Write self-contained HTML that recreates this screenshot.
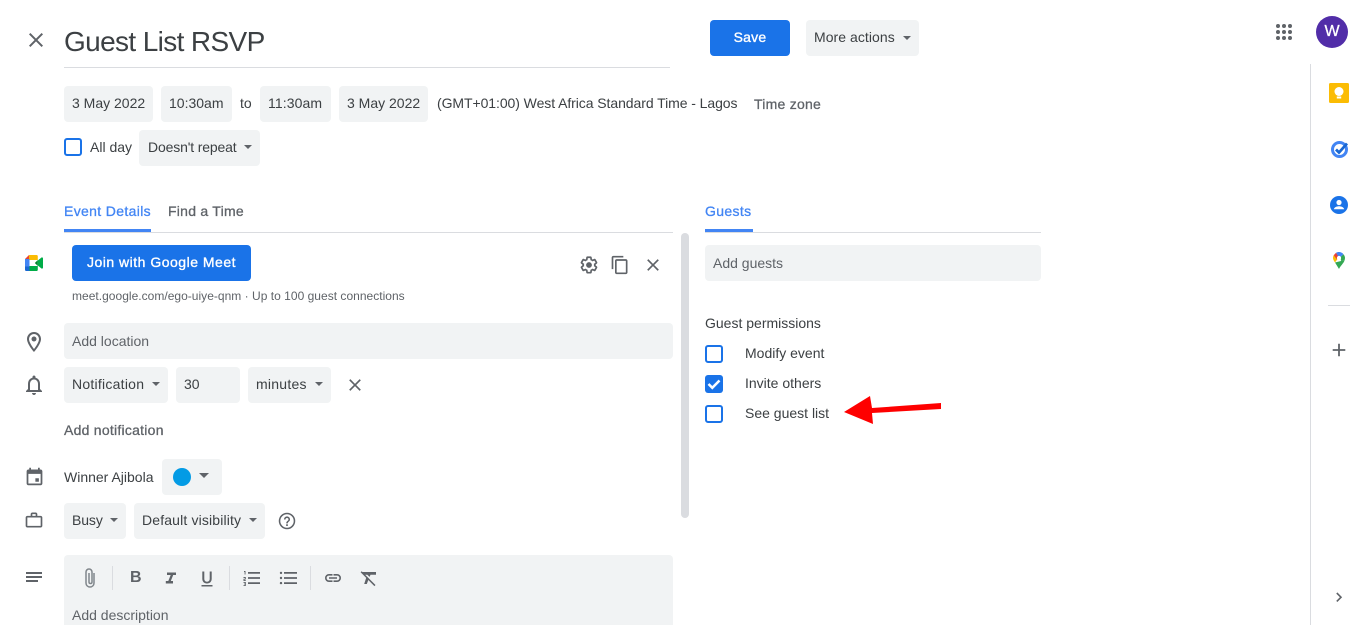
<!DOCTYPE html>
<html lang="en"><head><meta charset="utf-8"><title>Guest List RSVP</title>
<style>
html,body{margin:0;padding:0;width:1366px;height:625px;overflow:hidden;background:#fff}
body{position:relative;font-family:"Liberation Sans",Arial,sans-serif;color:#3c4043;font-size:14px}
.t{position:absolute;white-space:nowrap;line-height:20px;font-size:14px;color:#3c4043}
.b{position:absolute;background:#f1f3f4;border-radius:4px}
.m{color:#5f6368;-webkit-text-stroke:.3px #5f6368;letter-spacing:.25px}
.mb{color:#4285f4;-webkit-text-stroke:.3px #4285f4;letter-spacing:.35px}
.g{color:#5f6368}
.c{position:absolute;width:14px;height:14px;border:2px solid #1a73e8;border-radius:3px}
.a{position:absolute;width:0;height:0;border-left:4px solid transparent;border-right:4px solid transparent;border-top:4px solid #5f6368}
svg{position:absolute;overflow:visible}
.l{position:absolute;background:#dadce0}
.i{fill:#5f6368}
.s{position:absolute;width:1px;height:24px;background:#dadce0;top:566px}
.w{position:absolute;background:#1a73e8;border-radius:4px;color:#fff;font-size:14px;line-height:35px;text-align:center;-webkit-text-stroke:.35px #fff}
</style></head><body>

<svg style="left:24px;top:28px" width="24" height="24" viewBox="0 0 24 24"><path class="i" d="M19 6.410 17.590 5 12 10.590 6.410 5 5 6.410 10.590 12 5 17.590 6.410 19 12 13.410 17.590 19 19 17.590 13.410 12z"/></svg>
<div class="t" style="left:64px;top:24px;font-size:28px;line-height:36px;letter-spacing:-.63px">Guest List RSVP</div>
<div class="l" style="left:64px;top:67px;width:606px;height:1px"></div>

<div class="w" style="left:710px;top:20px;width:80px;height:36px;letter-spacing:.2px">Save</div>
<div class="b" style="left:806px;top:20px;width:113px;height:36px"></div>
<div class="t" style="left:814px;top:27px;letter-spacing:.05px">More actions</div>
<div class="a" style="left:903px;top:36px"></div>

<svg style="left:1276px;top:24px" width="16" height="16" viewBox="0 0 16 16"><g fill="#5f6368"><circle cx="2" cy="2" r="2"/><circle cx="8" cy="2" r="2"/><circle cx="14" cy="2" r="2"/><circle cx="2" cy="8" r="2"/><circle cx="8" cy="8" r="2"/><circle cx="14" cy="8" r="2"/><circle cx="2" cy="14" r="2"/><circle cx="8" cy="14" r="2"/><circle cx="14" cy="14" r="2"/></g></svg>
<div style="position:absolute;left:1316px;top:16px;width:32px;height:32px;border-radius:50%;background:#512da8;color:#fff;font-size:16px;line-height:32px;text-align:center;-webkit-text-stroke:.3px #fff">W</div>

<div class="b" style="left:64px;top:86px;width:89px;height:36px"></div><div class="t" style="left:72px;top:93px">3 May 2022</div>
<div class="b" style="left:161px;top:86px;width:71px;height:36px"></div><div class="t" style="left:169px;top:93px">10:30am</div>
<div class="t" style="left:240px;top:93px">to</div>
<div class="b" style="left:260px;top:86px;width:71px;height:36px"></div><div class="t" style="left:268px;top:93px;letter-spacing:.1px">11:30am</div>
<div class="b" style="left:339px;top:86px;width:89px;height:36px"></div><div class="t" style="left:347px;top:93px">3 May 2022</div>
<div class="t" style="left:437px;top:93px;letter-spacing:-.07px">(GMT+01:00) West Africa Standard Time - Lagos</div>
<div class="t m" style="left:754px;top:94px">Time zone</div>

<div class="c" style="left:64px;top:138px"></div>
<div class="t" style="left:90px;top:137px">All day</div>
<div class="b" style="left:139px;top:130px;width:121px;height:36px"></div>
<div class="t" style="left:148px;top:137px;letter-spacing:-.15px">Doesn't repeat</div>
<div class="a" style="left:244px;top:145px"></div>

<div class="t mb" style="left:64px;top:201px">Event Details</div>
<div class="t m" style="left:168px;top:201px">Find a Time</div>
<div style="position:absolute;left:64px;top:229px;width:87px;height:3px;background:#4285f4"></div>
<div class="l" style="left:64px;top:232px;width:609px;height:1px"></div>

<div class="t mb" style="left:705px;top:201px">Guests</div>
<div style="position:absolute;left:705px;top:229px;width:48px;height:3px;background:#4285f4"></div>
<div class="l" style="left:705px;top:232px;width:336px;height:1px"></div>

<div style="position:absolute;left:681px;top:233px;width:8px;height:285px;background:#dadce0;border-radius:4px"></div>

<svg style="left:25px;top:255px" width="18" height="16" viewBox="0 0 18 16">
<path fill="#fbbc04" d="M4 0h7.500c.8 0 1.300.6 1.300 1.300V5H4z"/>
<path fill="#00ac47" d="M4 11h8.800v3.700c0 .7-.5 1.300-1.300 1.300H4z"/>
<path fill="#ea4335" d="M4 0 0 4h4z"/>
<path fill="#4285f4" d="M0 4h4.500v8H0z"/>
<path fill="#1967d2" d="M0 11.500h4.500V16H1.300C.6 16 0 15.400 0 14.700z"/>
<path fill="#00832d" d="M12.800 5v6l-3-3z"/>
<path fill="#00ac47" d="m12.800 5.500 3.700-3c.6-.4 1.500 0 1.500.7v9.600c0 .7-.9 1.100-1.500.7l-3.700-3z"/>
</svg>
<div class="w" style="left:72px;top:245px;width:179px;height:36px;letter-spacing:.5px">Join with Google Meet</div>
<div class="t g" style="left:72px;top:286px;font-size:12px;letter-spacing:.02px">meet.google.com/ego-uiye-qnm · Up to 100 guest connections</div>

<svg style="left:579px;top:255px" width="20" height="20" viewBox="0 0 24 24"><path class="i" d="M13.850 22.250h-3.700c-.74 0-1.360-.54-1.480-1.270l-.27-1.890c-.27-.14-.53-.29-.79-.46l-1.800.72c-.7.260-1.470-.03-1.810-.65L2.150 15.500c-.35-.66-.2-1.440.36-1.880l1.530-1.190c-.01-.15-.02-.3-.02-.46 0-.15.010-.31.020-.46l-1.520-1.190c-.59-.45-.74-1.260-.37-1.880l1.850-3.200c.34-.62 1.110-.9 1.790-.63l1.810.73c.26-.17.520-.32.780-.46l.27-1.910c.12-.7.740-1.250 1.470-1.250h3.700c.74 0 1.360.54 1.480 1.270l.27 1.890c.27.140.53.290.79.460l1.800-.72c.71-.26 1.480.030 1.820.650l1.840 3.180c.36.660.2 1.440-.36 1.880l-1.520 1.190c.01.150.02.300.02.460s-.01.310-.02.460l1.520 1.190c.56.450.72 1.230.37 1.860l-1.860 3.220c-.34.620-1.110.900-1.800.630l-1.800-.72c-.26.170-.52.320-.78.460l-.27 1.910c-.1.680-.72 1.220-1.460 1.220zm-3.230-2h2.760l.37-2.550.53-.22c.44-.18.880-.44 1.340-.78l.45-.34 2.380.96 1.380-2.400-2.030-1.580.07-.56c.03-.26.060-.51.060-.78s-.03-.53-.06-.78l-.07-.56 2.030-1.580-1.390-2.400-2.390.96-.45-.35c-.42-.32-.87-.58-1.330-.77l-.52-.22-.37-2.550h-2.760l-.37 2.550-.53.210c-.44.190-.88.440-1.340.790l-.45.330-2.380-.95-1.390 2.390 2.030 1.580-.07.560a7 7 0 0 0-.06.790c0 .26.020.530.060.780l.07.560-2.030 1.580 1.380 2.400 2.390-.96.450.35c.43.330.860.580 1.330.770l.53.220.38 2.550z"/><circle class="i" cx="12" cy="12" r="3.500"/></svg>
<svg style="left:610px;top:255px" width="20" height="20" viewBox="0 0 24 24"><path class="i" d="M16 1H4c-1.100 0-2 .9-2 2v14h2V3h12V1zm3 4H8c-1.100 0-2 .9-2 2v14c0 1.100.9 2 2 2h11c1.100 0 2-.9 2-2V7c0-1.100-.9-2-2-2zm0 16H8V7h11v14z"/></svg>
<svg style="left:643px;top:255px" width="20" height="20" viewBox="0 0 24 24"><path class="i" d="M19 6.410 17.590 5 12 10.590 6.410 5 5 6.410 10.590 12 5 17.590 6.410 19 12 13.410 17.590 19 19 17.590 13.410 12z"/></svg>

<svg style="left:22px;top:330px" width="24" height="24" viewBox="0 0 24 24"><path class="i" d="M12 2C8.100 2 5 5.100 5 9c0 5.250 7 13 7 13s7-7.750 7-13c0-3.900-3.100-7-7-7zm0 17c-2-2.600-5-7-5-10a5 5 0 0 1 10 0c0 3-3 7.400-5 10z"/><circle class="i" cx="12" cy="9" r="2.500"/></svg>
<div class="b" style="left:64px;top:323px;width:609px;height:36px"></div>
<div class="t g" style="left:72px;top:331px">Add location</div>

<svg style="left:22px;top:373px" width="24" height="24" viewBox="0 0 24 24"><path class="i" d="M18 16v-5c0-3.100-1.600-5.600-4.500-6.300V4c0-.8-.7-1.500-1.500-1.500s-1.500.7-1.500 1.500v.7C7.600 5.400 6 7.900 6 11v5l-2 2v1h16v-1zm-2 1H8v-6c0-2.500 1.500-4.500 4-4.500s4 2 4 4.500zM12 22c1.100 0 2-.9 2-2h-4c0 1.100.9 2 2 2z"/></svg>
<div class="b" style="left:64px;top:367px;width:104px;height:36px"></div><div class="t" style="left:72px;top:374px;letter-spacing:.25px">Notification</div><div class="a" style="left:152px;top:382px"></div>
<div class="b" style="left:176px;top:367px;width:64px;height:36px"></div><div class="t" style="left:184px;top:374px">30</div>
<div class="b" style="left:248px;top:367px;width:83px;height:36px"></div><div class="t" style="left:256px;top:374px;letter-spacing:.25px">minutes</div><div class="a" style="left:315px;top:382px"></div>
<svg style="left:345px;top:375px" width="20" height="20" viewBox="0 0 24 24"><path class="i" d="M19 6.410 17.590 5 12 10.590 6.410 5 5 6.410 10.590 12 5 17.590 6.410 19 12 13.410 17.590 19 19 17.590 13.410 12z"/></svg>
<div class="t m" style="left:64px;top:420px">Add notification</div>

<svg style="left:24px;top:466px" width="21" height="21" viewBox="0 0 24 24"><path class="i" d="M19 4h-1V2h-2v2H8V2H6v2H5c-1.100 0-2 .9-2 2v14c0 1.100.9 2 2 2h14c1.100 0 2-.9 2-2V6c0-1.100-.9-2-2-2zm0 16H5V9h14z"/><path class="i" d="M13 14h4v4h-4z"/></svg>
<div class="t" style="left:64px;top:467px">Winner Ajibola</div>
<div class="b" style="left:162px;top:459px;width:60px;height:36px"></div>
<div style="position:absolute;left:173px;top:468px;width:18px;height:18px;border-radius:50%;background:#039be5"></div>
<div class="a" style="left:199px;top:473px;border-left-width:5px;border-right-width:5px;border-top-width:5px"></div>

<svg style="left:24px;top:510px" width="20" height="20" viewBox="0 0 24 24"><path class="i" d="M20 7h-4V5c0-1.100-.9-2-2-2h-4c-1.100 0-2 .9-2 2v2H4c-1.100 0-2 .9-2 2v10c0 1.100.9 2 2 2h16c1.100 0 2-.9 2-2V9c0-1.100-.9-2-2-2zM10 5h4v2h-4zm10 14H4V9h16z"/></svg>
<div class="b" style="left:64px;top:503px;width:62px;height:36px"></div><div class="t" style="left:72px;top:510px;letter-spacing:-.1px">Busy</div><div class="a" style="left:110px;top:518px"></div>
<div class="b" style="left:134px;top:503px;width:131px;height:36px"></div><div class="t" style="left:142px;top:510px;letter-spacing:.15px">Default visibility</div><div class="a" style="left:249px;top:518px"></div>
<svg style="left:276px;top:510px" width="22" height="22" viewBox="0 0 24 24"><path class="i" d="M12 3a9 9 0 1 0 0 18 9 9 0 0 0 0-18zm0 16.300a7.300 7.300 0 1 1 0-14.600 7.300 7.300 0 0 1 0 14.600zM11.100 15.600h1.800v1.800h-1.800zM12 7a3.300 3.300 0 0 0-3.300 3.300h1.700a1.600 1.600 0 1 1 3.200 0c0 1.600-2.500 1.500-2.500 4.300h1.800c0-2 2.400-2.300 2.400-4.300A3.300 3.300 0 0 0 12 7z"/></svg>

<svg style="left:26px;top:572px" width="16" height="10" viewBox="0 0 16 10"><path class="i" d="M0 0h16v2H0zM0 4h16v2H0zM0 8h12v2H0z"/></svg>
<div class="b" style="left:64px;top:555px;width:609px;height:80px"></div>
<svg style="left:78px;top:566px" width="24" height="24" viewBox="0 0 24 24"><path fill="none" stroke="#80868b" stroke-width="1.500" d="M16 7v10c0 2.300-1.800 4-4 4s-4-1.700-4-4V6c0-1.500 1.200-3 3-3s3 1.500 3 3v10c0 .8-.5 1.500-1.500 1.500S11 16.800 11 16V7"/></svg>
<div class="s" style="left:112px"></div>
<div class="t" style="left:130px;top:568px;font-weight:700;font-size:16px;color:#5f6368">B</div>
<svg style="left:159px;top:566px" width="24" height="24" viewBox="0 0 24 24"><path class="i" d="M8 6.500h9v2.500h-2.800l-2.400 6H14v2.500H6.800V15h2.500l2.400-6H8z"/></svg>
<svg style="left:195px;top:566px" width="24" height="24" viewBox="0 0 24 24"><path class="i" d="M6.500 19h11v1.500h-11zM12 17.500c-2.800 0-4.700-1.800-4.700-4.700V5.500h2v7.300c0 1.800 1 2.900 2.700 2.900s2.700-1.100 2.700-2.900V5.500h2v7.300c0 2.900-1.900 4.700-4.700 4.700z"/></svg>
<div class="s" style="left:229px"></div>
<svg style="left:240px;top:566px" width="24" height="24" viewBox="0 0 24 24"><path class="i" d="M8 6h12v1.800H8zM8 11.100h12v1.800H8zM8 16.200h12v1.800H8zM4 5h1.500v3.500H4.600V6H4zM3.500 11h2.300v2.500H4.500v.6h1.300v.9H3.500v-2.300h1.400V12H3.500zM3.500 16h2.300v4H3.500v-.9h1.400v-.7H4v-.8h.9v-.7H3.500z"/></svg>
<svg style="left:276px;top:566px" width="24" height="24" viewBox="0 0 24 24"><path class="i" d="M8 6h13v1.800H8zM8 11.100h13v1.800H8zM8 16.200h13v1.800H8z"/><circle class="i" cx="5" cy="6.900" r="1.200"/><circle class="i" cx="5" cy="12" r="1.200"/><circle class="i" cx="5" cy="17.100" r="1.200"/></svg>
<div class="s" style="left:310px"></div>
<svg style="left:321px;top:566px" width="24" height="24" viewBox="0 0 24 24"><path class="i" d="M8 8h3.500v1.600H8a2.400 2.400 0 0 0 0 4.800h3.500V16H8a4 4 0 0 1 0-8zm4.500 0H16a4 4 0 0 1 0 8h-3.500v-1.600H16a2.400 2.400 0 0 0 0-4.800h-3.500zM8 11.200h8v1.600H8z"/></svg>
<svg style="left:356px;top:566px" width="24" height="24" viewBox="0 0 24 24"><path class="i" d="M5 6h15v2.800h-5.500l-.9 2.100-2.300-2.100H8.500L5.700 6zM4.600 6.300l1.100-1.100L19.500 19l-1.100 1.100zM10.200 11.700l2.200 2.100-1.600 4.200H8.200z"/></svg>
<div class="t g" style="left:72px;top:605px">Add description</div>

<div class="b" style="left:705px;top:245px;width:336px;height:36px"></div>
<div class="t g" style="left:713px;top:253px">Add guests</div>
<div class="t" style="left:705px;top:313px">Guest permissions</div>
<div class="c" style="left:705px;top:345px"></div>
<div class="t" style="left:745px;top:343px">Modify event</div>
<div style="position:absolute;left:705px;top:375px;width:18px;height:18px;background:#1a73e8;border-radius:3px"></div>
<svg style="left:705px;top:375px" width="18" height="18" viewBox="0 0 18 18"><path d="M3.500 9 7.300 12.800 14.500 5.500" fill="none" stroke="#fff" stroke-width="2.500"/></svg>
<div class="t" style="left:745px;top:373px">Invite others</div>
<div class="c" style="left:705px;top:405px"></div>
<div class="t" style="left:745px;top:403px">See guest list</div>

<svg style="left:0;top:0" width="1366" height="625"><path fill="#fe0000" d="M844 412 870 396 872 408 941 403 941 409 872 413 873 424z"/></svg>

<div class="l" style="left:1310px;top:64px;width:1px;height:561px"></div>
<svg style="left:1329px;top:83px" width="20" height="20" viewBox="0 0 20 20"><rect width="20" height="20" rx="1.500" fill="#fbbc04"/><circle cx="10" cy="8.500" r="4.500" fill="#fff"/><rect x="7.800" y="13.500" width="4.400" height="2" fill="#fff"/></svg>
<svg style="left:1331px;top:140px" width="20" height="18" viewBox="0 0 20 18"><circle cx="8.500" cy="9.500" r="7" fill="none" stroke="#4285f4" stroke-width="3"/><path d="M5 9.500 8 12.500 16 3.500" fill="none" stroke="#1967d2" stroke-width="2.800"/></svg>
<svg style="left:1330px;top:196px" width="18" height="18" viewBox="0 0 18 18"><circle cx="9" cy="9" r="9" fill="#1a73e8"/><circle cx="9" cy="6.500" r="2.600" fill="#fff"/><path d="M3.800 13.200c.4-2 3.100-3 5.200-3s4.800 1 5.200 3z" fill="#fff"/></svg>
<svg style="left:1333px;top:252px" width="12" height="17" viewBox="0 0 12 17">
<path fill="#34a853" d="M2 10.500 6 17c.8-2.300 5-6 5.700-9L8 9z"/>
<path fill="#fbbc04" d="M.7 3.200C.2 4 0 5 0 6c0 1.800 1.200 3.200 2 4.500L4.500 7z"/>
<path fill="#ea4335" d="M.7 3.200 3 .8 5.500 4 4 7.500z"/>
<path fill="#34a853" d="M12 6c0-1.300-.6-2.800-1.600-3.800L7.500 5 8 9l3.700-1z"/>
<path fill="#4285f4" d="M3 .8C3.800.3 4.900 0 6 0c1.800 0 3.400.9 4.400 2.200L7.500 5 5 4z"/>
<circle cx="6" cy="6" r="2.100" fill="#fff"/>
</svg>
<div class="l" style="left:1328px;top:305px;width:22px;height:1px"></div>
<svg style="left:1330px;top:341px" width="18" height="18" viewBox="0 0 18 18"><path class="i" d="M15.300 9.900H9.900v5.400H8.100V9.900H2.700V8.100h5.400V2.700h1.800v5.400h5.400z"/></svg>
<svg style="left:1330px;top:588px" width="18" height="18" viewBox="0 0 18 18"><path d="M6.800 5 11 9.200 6.800 13.400" fill="none" stroke="#5f6368" stroke-width="1.600"/></svg>

</body></html>
